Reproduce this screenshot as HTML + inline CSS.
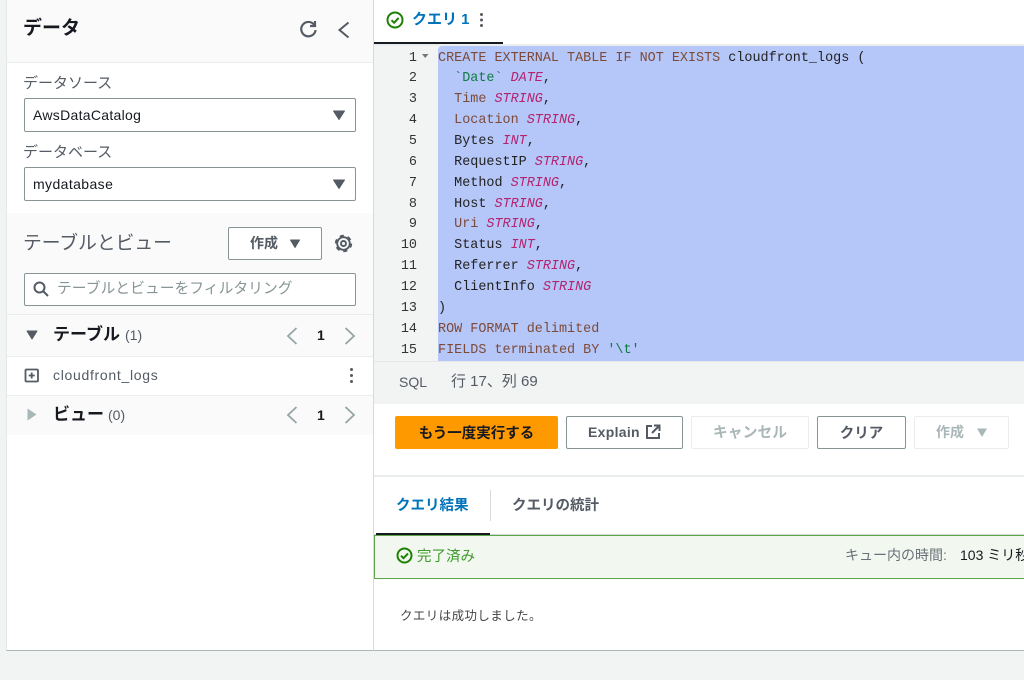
<!DOCTYPE html>
<html lang="ja"><head><meta charset="utf-8"><title>Athena</title>
<style>
html,body{margin:0;padding:0;width:1024px;height:680px;overflow:hidden;background:#f2f3f3}
body{position:relative;font-family:"Liberation Sans","Noto Sans CJK JP",sans-serif;color:#16191f;font-size:14px}
.a{position:absolute;white-space:nowrap}
.box{position:absolute;box-sizing:border-box;background:#fff;border:1px solid #879596;border-radius:2px}
.btn{position:absolute;box-sizing:border-box;border-radius:2px;text-align:center;font-weight:700;font-size:14px;height:33px;line-height:31px;background:#fff}
svg{position:absolute;overflow:visible}
.code{position:absolute;left:374px;top:46px;width:650px;height:315px;overflow:hidden;background:#f2f3f3}
.sel{position:absolute;left:64px;top:0;width:586px;height:315px;background:#b5c7f8;border-radius:4px 0 0 0}
.ln{position:absolute;width:43px;left:0;margin-top:2px;text-align:right;font:13.44px/20.86px "Liberation Mono",monospace;color:#333}
.cl{position:absolute;left:64px;margin-top:2px;font:13.44px/20.86px "Liberation Mono",monospace;color:#222;white-space:pre}
.k{color:#7d4a39}.t{color:#b5226e;font-style:italic}.s{color:#107a45}
</style></head><body>

<!-- left panel -->
<div class="a" style="left:6px;top:0;width:367px;height:650px;background:#fff;border-bottom:1px solid #aab7b8;border-left:1px solid #e4e7e7"></div>
<div class="a" style="left:7px;top:0;width:366px;height:62px;background:#fafafa;border-bottom:1px solid #eaeded"></div>
<div class="a" style="left:23px;top:15px;font-size:19px;font-weight:700;line-height:28px">データ</div>
<svg style="left:299px;top:20px" width="20" height="20" viewBox="0 0 20 20" fill="none" stroke="#545b64" stroke-width="2.200"><path d="M15.200 4.800A7.200 7.200 0 1 0 16.600 10"/><path d="M16 1v5h-5"/></svg>
<svg style="left:336px;top:20px" width="16" height="20" viewBox="0 0 16 20" fill="none" stroke="#545b64" stroke-width="2"><path d="M12.500 2.500L3.500 10l9 7.500"/></svg>

<div class="a" style="left:23px;top:73px;font-size:15px;line-height:22px;color:#545b64">データソース</div>
<div class="box" style="left:24px;top:98px;width:332px;height:34px"></div>
<div class="a" style="left:33px;top:106px;font-size:14px;line-height:18px;letter-spacing:.3px">AwsDataCatalog</div>
<svg style="left:332px;top:110px" width="14" height="10"><path d="M1.500 1h11L7 9.500z" fill="#545b64" stroke="#545b64" stroke-linejoin="round"/></svg>

<div class="a" style="left:23px;top:142px;font-size:15px;line-height:22px;color:#545b64">データベース</div>
<div class="box" style="left:24px;top:167px;width:332px;height:34px"></div>
<div class="a" style="left:33px;top:175px;font-size:14px;line-height:18px;letter-spacing:.4px">mydatabase</div>
<svg style="left:332px;top:179px" width="14" height="10"><path d="M1.500 1h11L7 9.500z" fill="#545b64" stroke="#545b64" stroke-linejoin="round"/></svg>

<!-- tables section -->
<div class="a" style="left:7px;top:213px;width:366px;height:222px;background:#fafafa"></div>
<div class="a" style="left:23px;top:230px;font-size:18.750px;line-height:26px;color:#545b64">テーブルとビュー</div>
<div class="btn" style="left:228px;top:227px;width:94px;border:1px solid #879596;color:#545b64">
<span style="position:absolute;left:21px;top:0;font-size:14px">作成</span></div>
<svg style="left:289px;top:239px" width="12" height="10"><path d="M1.500 1h9L6 8.500z" fill="#545b64" stroke="#545b64" stroke-linejoin="round"/></svg>
<svg style="left:334px;top:234px" width="19" height="19" viewBox="0 0 19 19" fill="none" stroke="#545b64"><circle cx="9.500" cy="9.500" r="6.300" stroke-width="1.900"/><circle cx="9.500" cy="9.500" r="7.800" stroke-width="1.800" stroke-dasharray="4.200 3.970"/><circle cx="9.500" cy="9.500" r="2.500" stroke-width="1.900"/></svg>

<div class="box" style="left:24px;top:273px;width:332px;height:33px"></div>
<svg style="left:33px;top:281px" width="16" height="16" viewBox="0 0 16 16" fill="none" stroke="#545b64" stroke-width="2"><circle cx="6.500" cy="6.500" r="5"/><path d="M10 10l5 5"/></svg>
<div class="a" style="left:57px;top:279px;font-size:14.800px;line-height:20px;color:#879596">テーブルとビューをフィルタリング</div>

<div class="a" style="left:7px;top:314px;width:366px;height:1px;background:#eaeded"></div>
<svg style="left:26px;top:330px" width="12" height="10"><path d="M1 1h10L6 9z" fill="#545b64" stroke="#545b64" stroke-linejoin="round"/></svg>
<div class="a" style="left:53px;top:323px;font-size:17px;font-weight:700;line-height:23px">テーブル</div>
<div class="a" style="left:125px;top:326px;font-size:14px;line-height:18px;color:#545b64">(1)</div>
<svg style="left:286px;top:327px" width="12" height="18" fill="none" stroke="#95a5a6" stroke-width="1.800"><path d="M10.500 1L2 9l8.500 8"/></svg>
<div class="a" style="left:317px;top:326px;font-size:14px;font-weight:700;line-height:18px">1</div>
<svg style="left:344px;top:327px" width="12" height="18" fill="none" stroke="#95a5a6" stroke-width="1.800"><path d="M1.500 1L10 9l-8.500 8"/></svg>

<div class="a" style="left:7px;top:356px;width:366px;height:38px;background:#fff;border-top:1px solid #eaeded;border-bottom:1px solid #eaeded"></div>
<svg style="left:24px;top:368px" width="16" height="15" fill="none" stroke="#545b64" stroke-width="1.800"><rect x="1.500" y="1.500" width="12.500" height="12" rx="1"/><path d="M7.700 4.500v6M4.700 7.500h6"/></svg>
<div class="a" style="left:53px;top:366px;font-size:14px;line-height:18px;color:#545b64;letter-spacing:.7px">cloudfront_logs</div>
<svg style="left:349px;top:367px" width="5" height="17" fill="#545b64"><circle cx="2.500" cy="2.500" r="1.500"/><circle cx="2.500" cy="8.500" r="1.500"/><circle cx="2.500" cy="14.500" r="1.500"/></svg>

<svg style="left:27px;top:408px" width="10" height="13"><path d="M.5 .5L9.500 6.500L.5 12.500z" fill="#a9b7b8"/></svg>
<div class="a" style="left:53px;top:403px;font-size:17px;font-weight:700;line-height:23px">ビュー</div>
<div class="a" style="left:108px;top:406px;font-size:14px;line-height:18px;color:#545b64">(0)</div>
<svg style="left:286px;top:406px" width="12" height="18" fill="none" stroke="#95a5a6" stroke-width="1.800"><path d="M10.500 1L2 9l8.500 8"/></svg>
<div class="a" style="left:317px;top:406px;font-size:14px;font-weight:700;line-height:18px">1</div>
<svg style="left:344px;top:406px" width="12" height="18" fill="none" stroke="#95a5a6" stroke-width="1.800"><path d="M1.500 1L10 9l-8.500 8"/></svg>

<!-- right panel -->
<div class="a" style="left:373px;top:0;width:651px;height:650px;background:#fff;border-left:1px solid #d5dbdb;border-bottom:1px solid #aab7b8"></div>
<div class="a" style="left:374px;top:44px;width:650px;height:2px;background:#eaeded"></div>
<div class="a" style="left:374px;top:42px;width:129px;height:2px;background:#16191f"></div>
<svg style="left:386px;top:11px" width="18" height="18" fill="none" stroke="#1d8102" stroke-width="2"><circle cx="9" cy="9" r="7.500"/><path d="M5.500 9.200l2.600 2.500 4.500-4.700"/></svg>
<div class="a" style="left:412px;top:10px;font-size:15px;font-weight:700;line-height:20px;color:#0073bb">クエリ 1</div>
<svg style="left:479px;top:12px" width="5" height="16" fill="#545b64"><circle cx="2.500" cy="2.500" r="1.500"/><circle cx="2.500" cy="8" r="1.500"/><circle cx="2.500" cy="13.500" r="1.500"/></svg>

<div class="code">
<div class="sel"></div>
<svg style="left:48px;top:8px" width="7" height="5"><path d="M0 0h6.500L3.200 4z" fill="#777"/></svg>
<div class="ln" style="top:0.500px">1</div><div class="ln" style="top:21.300px">2</div><div class="ln" style="top:42.200px">3</div><div class="ln" style="top:63px">4</div><div class="ln" style="top:83.900px">5</div><div class="ln" style="top:104.800px">6</div><div class="ln" style="top:125.600px">7</div><div class="ln" style="top:146.500px">8</div><div class="ln" style="top:167.400px">9</div><div class="ln" style="top:188.200px">10</div><div class="ln" style="top:209.100px">11</div><div class="ln" style="top:230px">12</div><div class="ln" style="top:250.800px">13</div><div class="ln" style="top:271.700px">14</div><div class="ln" style="top:292.500px">15</div>
<div class="cl" style="top:0.500px"><span class="k">CREATE EXTERNAL TABLE IF NOT EXISTS</span> cloudfront_logs (</div>
<div class="cl" style="top:21.300px">  <span class="s">`Date`</span> <span class="t">DATE</span>,</div>
<div class="cl" style="top:42.200px">  <span class="k">Time</span> <span class="t">STRING</span>,</div>
<div class="cl" style="top:63px">  <span class="k">Location</span> <span class="t">STRING</span>,</div>
<div class="cl" style="top:83.900px">  Bytes <span class="t">INT</span>,</div>
<div class="cl" style="top:104.800px">  RequestIP <span class="t">STRING</span>,</div>
<div class="cl" style="top:125.600px">  Method <span class="t">STRING</span>,</div>
<div class="cl" style="top:146.500px">  Host <span class="t">STRING</span>,</div>
<div class="cl" style="top:167.400px">  <span class="k">Uri</span> <span class="t">STRING</span>,</div>
<div class="cl" style="top:188.200px">  Status <span class="t">INT</span>,</div>
<div class="cl" style="top:209.100px">  Referrer <span class="t">STRING</span>,</div>
<div class="cl" style="top:230px">  ClientInfo <span class="t">STRING</span></div>
<div class="cl" style="top:250.800px">)</div>
<div class="cl" style="top:271.700px"><span class="k">ROW FORMAT delimited</span></div>
<div class="cl" style="top:292.500px"><span class="k">FIELDS terminated BY</span> <span class="s">'\t'</span></div>
</div>

<div class="a" style="left:374px;top:361px;width:650px;height:43px;background:#f2f3f3;border-top:1px solid #e4e7e7;box-sizing:border-box"></div>
<div class="a" style="left:399px;top:372px;font-size:14px;line-height:20px;color:#545b64">SQL</div>
<div class="a" style="left:451px;top:372px;font-size:15px;line-height:20px;color:#545b64">行 17、列 69</div>

<div class="btn" style="left:395px;top:416px;width:163px;background:#ff9900;color:#16191f;font-size:14.500px;line-height:37px">もう一度実行する</div>
<div class="btn" style="left:566px;top:416px;width:117px;border:1px solid #879596;color:#545b64;text-align:left;padding-left:21px;letter-spacing:.3px">Explain</div>
<svg style="left:645px;top:424px" width="16" height="16" fill="none" stroke="#545b64" stroke-width="2"><path d="M7 2H2v12h12V9M9 1.500h5.500V7M14 2L7 9"/></svg>
<div class="btn" style="left:691px;top:416px;width:118px;border:1px solid #eaeded;color:#aab7b8;font-size:14.800px;line-height:33px">キャンセル</div>
<div class="btn" style="left:817px;top:416px;width:89px;border:1px solid #879596;color:#545b64;font-size:14.500px;line-height:35px">クリア</div>
<div class="btn" style="left:914px;top:416px;width:95px;border:1px solid #eaeded;color:#aab7b8"><span style="position:absolute;left:21px;top:0">作成</span></div>
<svg style="left:976px;top:428px" width="12" height="10"><path d="M1 .5h10L6 9z" fill="#aab7b8"/></svg>

<div class="a" style="left:374px;top:475px;width:650px;height:2px;background:#eaeded"></div>
<div class="a" style="left:396px;top:496px;font-size:14.500px;font-weight:700;line-height:20px;color:#0073bb">クエリ結果</div>
<div class="a" style="left:490px;top:490px;width:1px;height:31px;background:#d5dbdb"></div>
<div class="a" style="left:512px;top:496px;font-size:14.500px;font-weight:700;line-height:20px;color:#545b64">クエリの統計</div>

<div class="a" style="left:374px;top:534px;width:650px;height:2px;background:#d5dbdb"></div>
<div class="a" style="left:376px;top:533px;width:114px;height:2px;background:#16191f"></div>
<div class="a" style="left:374px;top:535px;width:650px;height:44px;background:#f2f8f0;border:1px solid #5da54a;border-right:0;box-sizing:border-box"></div>
<svg style="left:396px;top:547px" width="17" height="17" fill="none" stroke="#1d8102" stroke-width="2"><circle cx="8.500" cy="8.500" r="7"/><path d="M5 8.700l2.500 2.500 4.500-4.700"/></svg>
<div class="a" style="left:417px;top:547px;font-size:14.500px;line-height:20px;color:#3f9a2c">完了済み</div>
<div class="a" style="left:845px;top:545px;font-size:14px;line-height:20px;color:#687078">キュー内の時間:</div>
<div class="a" style="left:960px;top:545px;width:64px;overflow:hidden;font-size:14px;line-height:20px;color:#16191f">103 ミリ秒</div>
<div class="a" style="left:400px;top:607px;font-size:12.500px;line-height:18px;color:#444;letter-spacing:.4px">クエリは成功しました。</div>

</body></html>
